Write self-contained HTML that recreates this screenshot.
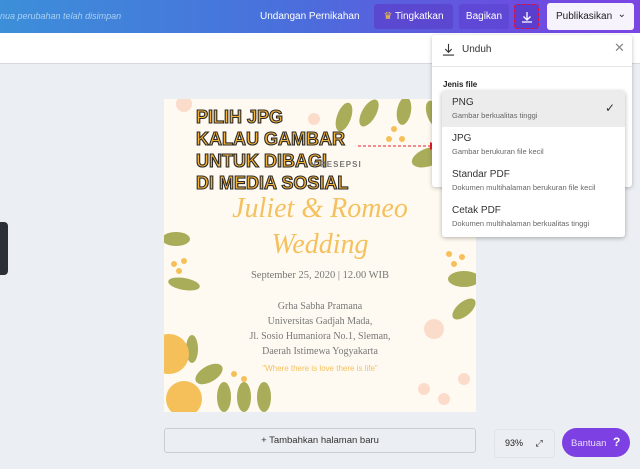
<!DOCTYPE html>
<html><head><style>
*{margin:0;padding:0;box-sizing:border-box}
body{width:640px;height:469px;overflow:hidden;background:#ebeef2;font-family:"Liberation Sans",sans-serif;position:relative}
.hdr{position:absolute;left:0;top:0;width:640px;height:33px;background:linear-gradient(90deg,#3c8fd9 0%,#4a6fdc 45%,#6a4fe0 80%,#7b45e4 100%)}
.abs{position:absolute}
.bar{position:absolute;left:0;top:33px;width:640px;height:31px;background:#fff;border-bottom:1px solid #d5d9de}
.btn{position:absolute;top:4px;height:25px;border-radius:3px;color:#fff;font-size:10px;line-height:25px;text-align:center}
.canvas{position:absolute;left:164px;top:99px;width:312px;height:313px;background:#fffaf1;overflow:hidden}
.ov{font-family:"Liberation Sans Narrow","Liberation Sans",sans-serif;font-weight:bold;font-size:18px;color:#f3b23a;-webkit-text-stroke:1.1px #2a2a2a;line-height:22px}
.pop{position:absolute;left:432px;top:35px;width:200px;height:152px;background:#fff;border-radius:3px;box-shadow:0 1px 4px rgba(0,0,0,.25)}
.dd{position:absolute;left:442px;top:91px;width:183px;height:146px;background:#fff;border-radius:3px;box-shadow:0 1px 5px rgba(0,0,0,.3);overflow:hidden}
.it{height:36px;padding:6px 10px;font-size:10px;color:#333}
.it small{display:block;font-size:7.5px;color:#666;margin-top:3px}
</style></head><body>
<div class="hdr"></div>
<div class="abs" style="left:0;top:11px;font-size:9px;font-style:italic;color:#a9d0f2">nua perubahan telah disimpan</div>
<div class="abs" style="left:260px;top:11px;font-size:10px;color:#fff">Undangan Pernikahan</div>
<div class="btn" style="left:374px;width:79px;background:#5a48d0"><span style="color:#f5c242">♛</span> Tingkatkan</div>
<div class="btn" style="left:459px;width:50px;background:#5f48d6">Bagikan</div>
<div class="btn" style="left:514px;width:25px;background:#5a3fcf;border:1px dashed #e0103a">
<svg width="14" height="14" viewBox="0 0 14 14" style="margin-top:5px"><path d="M7 2v8M3.5 6.5L7 10l3.5-3.5M2 12h10" stroke="#fff" stroke-width="1.3" fill="none"/></svg></div>
<div class="btn" style="left:547px;width:87px;background:#f6f3fc;color:#222;top:3px;height:27px;line-height:27px;text-align:left;padding-left:9px">Publikasikan <span style="position:absolute;right:8px;top:-2px">⌄</span></div>
<div class="bar"></div>
<div class="abs" style="left:0;top:222px;width:8px;height:53px;background:#2b2f36;border-radius:0 4px 4px 0"></div>

<div class="canvas">
<svg width="312" height="313" style="position:absolute;left:0;top:0">
<g fill="#a9ad5a">
<ellipse cx="180" cy="18" rx="7" ry="15" transform="rotate(20 180 18)"/>
<ellipse cx="205" cy="14" rx="7" ry="15" transform="rotate(30 205 14)"/>
<ellipse cx="240" cy="12" rx="7" ry="14" transform="rotate(10 240 12)"/>
<ellipse cx="270" cy="15" rx="7" ry="14" transform="rotate(-20 270 15)"/>
<ellipse cx="265" cy="58" rx="18" ry="9" transform="rotate(-20 265 58)"/>
<ellipse cx="12" cy="140" rx="14" ry="7"/>
<ellipse cx="20" cy="185" rx="16" ry="6" transform="rotate(10 20 185)"/>
<ellipse cx="300" cy="180" rx="16" ry="8"/>
<ellipse cx="300" cy="210" rx="14" ry="7" transform="rotate(-40 300 210)"/>
<ellipse cx="45" cy="275" rx="15" ry="8" transform="rotate(-30 45 275)"/>
<ellipse cx="60" cy="298" rx="7" ry="15"/><ellipse cx="80" cy="298" rx="7" ry="15"/><ellipse cx="100" cy="298" rx="7" ry="15"/>
<ellipse cx="28" cy="250" rx="6" ry="14"/>
</g>
<g fill="#f5c05a">
<circle cx="5" cy="255" r="20"/><circle cx="20" cy="300" r="18"/>
<circle cx="10" cy="165" r="3"/><circle cx="20" cy="162" r="3"/><circle cx="15" cy="172" r="3"/>
<circle cx="290" cy="165" r="3"/><circle cx="298" cy="158" r="3"/><circle cx="285" cy="155" r="3"/>
<circle cx="230" cy="30" r="3"/><circle cx="225" cy="40" r="3"/><circle cx="238" cy="40" r="3"/>
<circle cx="80" cy="280" r="3"/><circle cx="70" cy="275" r="3"/>
</g>
<g fill="#fbdccb"><circle cx="260" cy="290" r="6"/><circle cx="280" cy="300" r="6"/><circle cx="300" cy="280" r="6"/><circle cx="270" cy="230" r="10"/><circle cx="20" cy="5" r="8"/><circle cx="150" cy="20" r="6"/></g>
</svg>
<div class="abs ov" style="left:32px;top:7px">PILIH JPG<br>KALAU GAMBAR<br>UNTUK DIBAGI<br>DI MEDIA SOSIAL</div>
<div class="abs" style="left:146px;top:61px;font-size:8px;font-weight:bold;color:#777;letter-spacing:1px">N RESEPSI</div>
<div class="abs" style="left:0;width:312px;top:92px;text-align:center;font-family:'Liberation Serif',serif;font-style:italic;font-size:28px;color:#f4c15e;line-height:36px">Juliet &amp; Romeo<br>Wedding</div>
<div class="abs" style="left:0;width:312px;top:171px;text-align:center;font-family:'Liberation Serif',serif;font-size:10.5px;color:#777">September 25, 2020 | 12.00 WIB</div>
<div class="abs" style="left:0;width:312px;top:200px;text-align:center;font-family:'Liberation Serif',serif;font-size:10px;color:#777;line-height:15px">Grha Sabha Pramana<br>Universitas Gadjah Mada,<br>Jl. Sosio Humaniora No.1, Sleman,<br>Daerah Istimewa Yogyakarta</div>
<div class="abs" style="left:0;width:312px;top:265px;text-align:center;font-size:8px;color:#f4c15e">"Where there is love there is life"</div>
</div>
<svg class="abs" style="left:358px;top:141px" width="82" height="10"><path d="M0 5h74" stroke="#e0202a" stroke-dasharray="3 2"/><path d="M72 1l8 4-8 4z" fill="#e0202a"/></svg>

<div class="pop">
<svg class="abs" style="left:10px;top:8px" width="13" height="13" viewBox="0 0 14 14"><path d="M7 1v9M3.5 6.5L7 10l3.5-3.5M1 13h12" stroke="#333" stroke-width="1.2" fill="none"/></svg>
<div class="abs" style="left:30px;top:9px;font-size:10px;color:#333">Unduh</div>
<div class="abs" style="left:182px;top:5px;font-size:13px;color:#888">✕</div>
<div class="abs" style="left:0;top:31px;width:200px;border-top:1px solid #e6e6e6"></div>
<div class="abs" style="left:11px;top:45px;font-size:8px;font-weight:bold;color:#222">Jenis file</div>
</div>
<div class="dd">
<div class="it" style="background:#ececec;position:relative">PNG<small>Gambar berkualitas tinggi</small><span style="position:absolute;right:10px;top:10px;font-size:12px">✓</span></div>
<div class="it">JPG<small>Gambar berukuran file kecil</small></div>
<div class="it">Standar PDF<small>Dokumen multihalaman berukuran file kecil</small></div>
<div class="it">Cetak PDF<small>Dokumen multihalaman berkualitas tinggi</small></div>
</div>

<div class="abs" style="left:164px;top:428px;width:312px;height:25px;border:1px solid #c9cdd2;border-radius:3px;background:#ebeef2;text-align:center;line-height:23px;font-size:9.5px;color:#333">+ Tambahkan halaman baru</div>
<div class="abs" style="left:494px;top:429px;width:61px;height:29px;border:1px solid #e0e3e7;border-radius:4px;font-size:9px;color:#222;line-height:27px;padding-left:10px">93% <span style="margin-left:10px">⤢</span></div>
<div class="abs" style="left:562px;top:428px;width:68px;height:29px;border-radius:15px;background:#7d40e3;color:#e8dcfb;font-size:9.5px;line-height:29px;padding-left:9px">Bantuan <b style="color:#fff;font-size:12px;margin-left:4px">?</b></div>
</body></html>
